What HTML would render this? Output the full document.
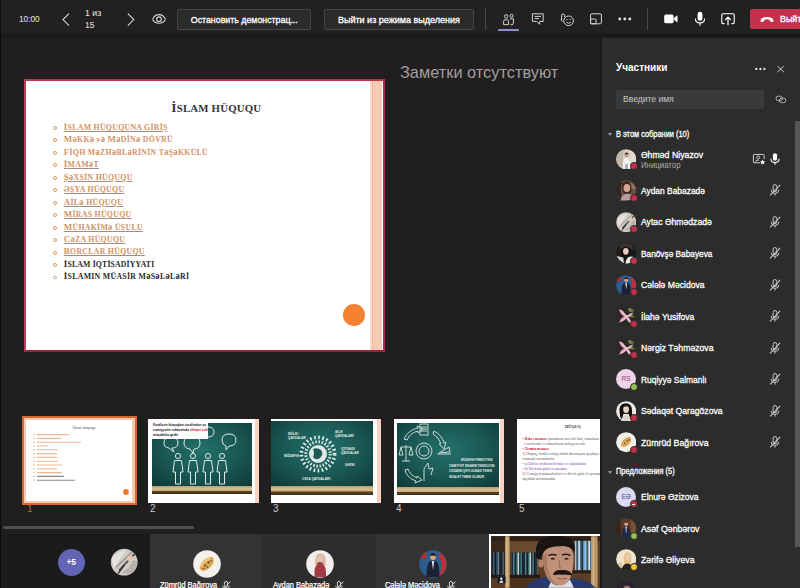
<!DOCTYPE html>
<html lang="ru">
<head>
<meta charset="utf-8">
<title>Собрание</title>
<style>
html,body{margin:0;padding:0;}
body{width:800px;height:588px;overflow:hidden;background:#1e1c1d;position:relative;font-family:"Liberation Sans",sans-serif;color:#fff;}
.abs{position:absolute;}
#topbar{left:0;top:0;width:800px;height:39px;background:linear-gradient(180deg,#222021 0,#222021 32.500px,#1b1a1a 34px,#1b1a1a 37px,#1f1d1e 39px);}
.tb-txt{-webkit-text-stroke:.12px #dcdcdc;color:#dcdcdc;font-size:9.2px;white-space:nowrap;transform-origin:0 50%;}
.btn span{display:inline-block;transform:scaleX(.93);transform-origin:50% 50%;-webkit-text-stroke:.32px #fff;}
.btn{box-sizing:border-box;height:21px;top:8.5px;border:1px solid #474646;background:#2c2b2b;border-radius:2px;color:#fff;font-size:9.600px;line-height:19px;text-align:center;white-space:nowrap;overflow:hidden;}
.vdiv{width:1px;top:8px;height:22px;background:#4b4a4a;}
#leave{left:750px;top:9px;width:52px;height:20px;background:#c4314b;border-radius:2px 0 0 2px;}
/* stage */
#stage{left:0;top:39px;width:602px;height:495px;background:#201e1f;}
#slide{left:23.800px;top:79.200px;width:360.900px;height:272.600px;background:#fff;box-sizing:border-box;border:2.400px solid #c0324f;border-left-color:#b9405c;border-right-color:#b02a49;border-bottom:2.900px solid #9a2340;overflow:hidden;font-family:"Liberation Serif",serif;}
#slide .strip{left:344.400px;top:0;width:12px;height:269px;background:linear-gradient(90deg,#fcdccd 0,#fcdccd 2.200px,#ecb79b 2.300px,#ecb79b 3.200px,#fccab4 3.300px);}
#slide .strip2{display:none;}
#slide h1{position:absolute;margin:0;left:0;width:381px;top:18.800px;text-align:center;font-size:13.5px;line-height:16px;font-weight:bold;color:#33333b;letter-spacing:.2px;}
#slide h1 small{font-size:10.8px;}
#slide ul{position:absolute;left:0;top:40.600px;margin:0;padding:0;list-style:none;}
#slide li{position:relative;height:12.480px;line-height:12.480px;font-size:7.800px;font-weight:bold;color:#d29265;padding-left:38px;white-space:nowrap;letter-spacing:.3px;}
#slide li::before{content:"";position:absolute;left:27.200px;top:4.200px;width:1.900px;height:1.900px;border:.9px solid #dc9258;border-radius:50%;}
#slide li u{text-decoration-thickness:.7px;text-underline-offset:.8px;text-decoration-color:#a08c80;}
#slide li.k{color:#2a2a2a;}
#slide li b{font-size:8.900px;line-height:1px;}
#slide li i{font-style:normal;font-size:9.600px;line-height:1px;}
#notes{left:399.500px;top:62px;font-size:16.600px;line-height:22px;color:#a09f9f;white-space:nowrap;transform:scaleX(.985);transform-origin:0 50%;}
.thumb{top:418px;height:87px;background:#fff;overflow:hidden;}
.tnum{top:503px;font-size:10px;line-height:12px;color:#c8c8c8;}
#hscroll{left:3px;top:525.700px;width:190.500px;height:3.800px;background:#525151;border-radius:2px;}
/* bottom strip */
#strip{left:0;top:534px;width:602px;height:54px;background:#1c1b1b;}
.tile{top:534px;height:54px;width:113px;}
.av{border-radius:50%;overflow:hidden;}
.tname{top:580.100px;font-size:8.200px;line-height:12px;color:#fff;white-space:nowrap;-webkit-text-stroke:.25px #fff;transform:scaleX(.905);transform-origin:0 50%;}
/* right panel */
#panel{left:602px;top:38px;width:198px;height:550px;background:#2d2c2c;}
.pname{left:640.800px;font-size:9.500px;line-height:12px;color:#fff;white-space:nowrap;-webkit-text-stroke:.3px #fff;transform-origin:0 50%;}
.psub{left:640.800px;font-size:8.500px;line-height:11px;color:#adacac;white-space:nowrap;transform:scaleX(.92);transform-origin:0 50%;}
.sect{left:616px;font-size:8.200px;line-height:11px;color:#fff;-webkit-text-stroke:.28px #fff;white-space:nowrap;transform:scaleX(.905);transform-origin:0 50%;}
.tri{left:607.5px;width:0;height:0;border-left:2.6px solid transparent;border-right:2.6px solid transparent;border-top:3.4px solid #9b9a9a;}
.pav{left:616px;width:20px;height:20px;border-radius:50%;overflow:hidden;}
.st{left:629.5px;width:6px;height:6px;border-radius:50%;border:1.2px solid #2d2c2c;background:#c4314b;}
.mic{left:768px;width:14px;height:14px;}
</style>
</head>
<body>
<div class="abs" style="left:0;top:0;width:1.300px;height:588px;background:#0b0b0b;z-index:5;"></div>
<div id="topbar" class="abs">
  <div class="abs tb-txt" style="left:18.700px;top:13px;line-height:12px;transform:scaleX(.9);">10:00</div>
  <svg class="abs" style="left:60px;top:11px" width="12" height="17" viewBox="0 0 12 17"><path d="M9 2.600 L3 8.600 L9 14.600" fill="none" stroke="#d6d6d6" stroke-width="1.100"/></svg>
  <div class="abs tb-txt" style="left:85px;top:6.900px;line-height:12px;transform:scaleX(.95);">1 из</div>
  <div class="abs tb-txt" style="left:85px;top:19.400px;line-height:12px;transform:scaleX(.93);">15</div>
  <svg class="abs" style="left:124px;top:11px" width="12" height="17" viewBox="0 0 12 17"><path d="M3.800 2.600 L9.800 8.600 L3.800 14.600" fill="none" stroke="#d6d6d6" stroke-width="1.100"/></svg>
  <svg class="abs" style="left:151px;top:12px" width="16" height="14" viewBox="0 0 16 14"><path d="M1.6 7.4 C3 3.9 5.4 2.6 8 2.6 C10.6 2.6 13 3.9 14.4 7.4" fill="none" stroke="#d6d6d6" stroke-width="1.1"/><path d="M1.6 7.4 C3 10.2 5.4 11.2 8 11.2 C10.6 11.2 13 10.2 14.4 7.4" fill="none" stroke="#d6d6d6" stroke-width="1.1"/><circle cx="8" cy="7.2" r="2.3" fill="none" stroke="#d6d6d6" stroke-width="1.1"/></svg>
  <div class="abs btn" style="left:177px;width:134px;"><span style="transform:scaleX(.918)">Остановить демонстрац...</span></div>
  <div class="abs btn" style="left:324px;width:150px;"><span style="transform:scaleX(.94)">Выйти из режима выделения</span></div>
  <div class="abs vdiv" style="left:485px;"></div>
  <!-- participants -->
  <svg class="abs" style="left:500.800px;top:12.600px" width="16" height="14" viewBox="0 0 16 14"><circle cx="5.2" cy="3.4" r="1.7" fill="none" stroke="#d6d6d6" stroke-width="1"/><circle cx="10.6" cy="2.8" r="1.5" fill="none" stroke="#d6d6d6" stroke-width="1"/><path d="M2.6 11.6 V8.4 Q2.6 6.8 4.2 6.8 H6.2 Q7.6 6.8 7.6 8.4 V11.6 Z" fill="none" stroke="#d6d6d6" stroke-width="1"/><path d="M8.8 5.8 H12.4 V10.2 Q12.4 11.6 10.8 11.6 H9.4" fill="none" stroke="#d6d6d6" stroke-width="1"/></svg>
  <div class="abs" style="left:498px;top:29px;width:21px;height:2px;background:#8f91cf;border-radius:1px;"></div>
  <!-- chat -->
  <svg class="abs" style="left:530px;top:12px" width="16" height="14" viewBox="0 0 16 14"><path d="M2.4 1.8 H13.2 V9.4 H9.6 V12.2 L6.6 9.4 H2.4 Z" fill="none" stroke="#d6d6d6" stroke-width="1"/><path d="M4.6 4.4 H11 M4.6 6.6 H9" stroke="#d6d6d6" stroke-width="1"/></svg>
  <!-- reactions -->
  <svg class="abs" style="left:559px;top:11.800px" width="17" height="16" viewBox="0 0 17 16"><circle cx="9.6" cy="8.8" r="4.8" fill="none" stroke="#d6d6d6" stroke-width="1"/><path d="M7.4 10.4 Q9.6 12.2 11.8 10.4" fill="none" stroke="#d6d6d6" stroke-width="1"/><circle cx="8" cy="7.6" r=".7" fill="#d6d6d6"/><circle cx="11.2" cy="7.6" r=".7" fill="#d6d6d6"/><path d="M2.6 7.6 V3.4 Q2.6 2 4 2 Q5.6 2 5.6 3.6 V5.2" fill="none" stroke="#d6d6d6" stroke-width="1"/><path d="M2.6 6 Q1.6 8 3.4 9.6" fill="none" stroke="#d6d6d6" stroke-width="1"/></svg>
  <!-- rooms -->
  <svg class="abs" style="left:588px;top:12px" width="16" height="14" viewBox="0 0 16 14"><rect x="2.6" y="1.8" width="10.8" height="10" rx="1.2" fill="none" stroke="#d6d6d6" stroke-width="1"/><rect x="2.6" y="7" width="5.4" height="4.8" rx=".8" fill="none" stroke="#d6d6d6" stroke-width="1"/></svg>
  <!-- more -->
  <svg class="abs" style="left:617px;top:16px" width="16" height="6" viewBox="0 0 16 6"><circle cx="2.800" cy="3" r="1.450" fill="#dedede"/><circle cx="7.800" cy="3" r="1.450" fill="#dedede"/><circle cx="12.800" cy="3" r="1.450" fill="#dedede"/></svg>
  <div class="abs vdiv" style="left:647px;"></div>
  <!-- camera -->
  <svg class="abs" style="left:663px;top:13px" width="16" height="12" viewBox="0 0 16 12"><rect x="1.2" y="1.6" width="9.4" height="8.6" rx="1.6" fill="#fff"/><path d="M11.2 5 L14.2 2.8 V9 L11.2 6.8 Z" fill="#fff" stroke="#fff" stroke-width=".6" stroke-linejoin="round"/></svg>
  <!-- mic -->
  <svg class="abs" style="left:692px;top:10px" width="16" height="18" viewBox="0 0 16 18"><rect x="5.6" y="1.8" width="4.8" height="9" rx="2.4" fill="#fff"/><path d="M3.4 8.6 Q3.4 13 8 13 Q12.600 13 12.600 8.600" fill="none" stroke="#fff" stroke-width="1.1"/><path d="M8 13 V15.800" stroke="#fff" stroke-width="1.1"/></svg>
  <!-- share -->
  <svg class="abs" style="left:720px;top:11px" width="16" height="16" viewBox="0 0 16 16"><path d="M4.600 12.600 H3 Q1.8 12.600 1.8 11.400 V4 Q1.8 2.800 3 2.800 H13 Q14.200 2.800 14.200 4 V11.400 Q14.200 12.600 13 12.600 H11.400" fill="none" stroke="#fff" stroke-width="1.1"/><path d="M8 14.200 V6.600 M5.200 9 L8 6.200 L10.800 9" fill="none" stroke="#fff" stroke-width="1.2"/></svg>
  <div id="leave" class="abs">
    <svg class="abs" style="left:9px;top:6px" width="16" height="9" viewBox="0 0 16 9"><path d="M1.6 6.200 Q1.200 3.600 4.400 2.600 Q8 1.600 11.600 2.600 Q14.800 3.600 14.400 6.200 Q14.300 7 13.400 6.900 L11.400 6.500 Q10.700 6.300 10.700 5.600 V4.700 Q8 4 5.300 4.700 V5.600 Q5.300 6.300 4.600 6.500 L2.600 6.900 Q1.700 7 1.600 6.200 Z" fill="#fff"/></svg>
    <div class="abs" style="left:30px;top:4px;font-size:9.600px;line-height:12px;-webkit-text-stroke:.32px #fff;color:#fff;white-space:nowrap;transform:scaleX(.93);transform-origin:0 50%;">Выйти</div>
  </div>
</div>
<div id="stage" class="abs"></div>
<div id="slide" class="abs">
  <div class="abs strip"></div><div class="abs strip2"></div>
  <h1>İ<small>SLAM HÜQUQU</small></h1>
  <ul>
    <li><u><b>İ</b>SLAM HÜQUQUNA GİRİŞ</u></li>
    <li><b>M</b><i>ə</i>KK<i>ə</i> v<i>ə</i> <b>M</b><i>ə</i>DİN<i>ə</i> DÖVRÜ</li>
    <li><b>F</b>İQH M<i>ə</i>ZH<i>ə</i>BL<i>ə</i>RİNİN T<i>ə</i>Ş<i>ə</i>KKÜLÜ</li>
    <li><u><b>İ</b>MAM<i>ə</i>T</u></li>
    <li><u><b>Ş</b><i>ə</i>XSİN HÜQUQU</u></li>
    <li><u>ƏŞYA HÜQUQU</u></li>
    <li><u><b>A</b>İL<i>ə</i> HÜQUQU</u></li>
    <li><u><b>M</b>İRAS HÜQUQU</u></li>
    <li><u><b>M</b>ÜHAKİM<i>ə</i> ÜSULU</u></li>
    <li><u><b>C</b><i>ə</i>ZA HÜQUQU</u></li>
    <li><u><b>B</b>ORCLAR HÜQUQU</u></li>
    <li class="k" style="letter-spacing:.15px"><b>İ</b>SLAM İQTİSADİYYATI</li>
    <li class="k"><b>İ</b>SLAMIN MÜASİR M<i>ə</i>S<i>ə</i>L<i>ə</i>L<i>ə</i>Rİ</li>
  </ul>

  <div class="abs" style="left:317.500px;top:223px;width:21.600px;height:21.600px;border-radius:50%;background:#f58233;"></div>
</div>
<div id="notes" class="abs">Заметки отсутствуют</div>
<!--THUMBS-START-->
<!-- thumb 1 (selected) -->
<div class="abs" style="left:22px;top:416px;width:115px;height:89px;background:#d9692b;"></div>
<div class="abs" style="left:24px;top:418px;width:111px;height:85px;background:#f7c9b1;"></div>
<div class="abs" style="left:26px;top:420px;width:106px;height:81px;background:#fff;font-family:'Liberation Serif',serif;overflow:hidden;">
  <div class="abs" style="left:0;top:5px;width:116px;text-align:center;font-size:4.2px;line-height:6px;color:#555;white-space:nowrap;">İslam hüququ</div>
  <svg class="abs" style="left:0;top:0" width="106" height="81" viewBox="0 0 106 81">
    <g stroke="#ecb896" stroke-width="1.100">
      <path d="M11 14.600H43M11 18.400H35M11 22.200H55M11 26H22M11 29.800H32M11 33.600H31M11 37.400H31M11 41.200H32M11 45H36M11 48.800H31M11 52.600H36"/>
    </g>
    <g stroke="#8a8a8a" stroke-width="1.100"><path d="M11 56.400H38M11 60.200H49"/></g>
    <g fill="#e89a6a"><circle cx="8" cy="14.600" r=".7"/><circle cx="8" cy="18.400" r=".7"/><circle cx="8" cy="22.200" r=".7"/><circle cx="8" cy="26" r=".7"/><circle cx="8" cy="29.800" r=".7"/><circle cx="8" cy="33.600" r=".7"/><circle cx="8" cy="37.400" r=".7"/><circle cx="8" cy="41.200" r=".7"/><circle cx="8" cy="45" r=".7"/><circle cx="8" cy="48.800" r=".7"/><circle cx="8" cy="52.600" r=".7"/><circle cx="8" cy="56.400" r=".7"/><circle cx="8" cy="60.200" r=".7"/></g>
    <circle cx="100" cy="72" r="2.900" fill="#f07a2a"/>
  </svg>
</div>
<!-- thumb 2 -->
<div class="abs" style="left:148px;top:419px;width:111px;height:84px;background:#fff;overflow:hidden;">
  <div class="abs" style="left:107px;top:0;width:4px;height:84px;background:#f9d3c0;"></div>
  <div class="abs" style="left:4px;top:4px;width:100px;height:63.3px;background:radial-gradient(ellipse 70% 75% at 50% 42%,#23706a 0,#1a5853 55%,#0f3c39 100%);"></div><div class="abs" style="left:4px;top:67.3px;width:100px;height:8.2px;background:linear-gradient(180deg,#b99d6c 0,#d9c08f 35%,#c7a871 60%,#5e4526 62%,#3a2c18 100%);"></div>
  <svg class="abs" style="left:4px;top:4px" width="100" height="72" viewBox="0 0 100 72">
    <g fill="none" stroke="#dfe9e6" stroke-width="1">
      <circle cx="26" cy="33" r="2.600"/><path d="M22.500 37.500H29.500L31 49H28.500V61H23.500V49H21Z"/>
      <circle cx="41" cy="33" r="2.600"/><path d="M37.500 37.500H44.500L46 49H43.500V61H38.500V49H36Z"/>
      <circle cx="56" cy="33" r="2.600"/><path d="M52.500 37.500H59.500L61 49H58.500V61H53.500V49H51Z"/>
      <circle cx="70" cy="33" r="2.600"/><path d="M66.500 37.500H73.500L75 49H72.500V61H67.500V49H65Z"/>
      <path d="M12 20Q12 14 19 14Q26 14 26 20Q26 25 20 25L22 29L17 25Q12 24.500 12 20Z"/>
      <path d="M32 20Q32 13 40 13Q48 13 48 20Q48 26 42 26L41 30L38 26Q32 25.500 32 20Z"/>
      <circle cx="57" cy="9" r="5"/>
      <path d="M70 17Q70 11 77 11Q84 11 84 17Q84 23 77 23L74 27L74 23Q70 22 70 17Z"/>
    </g>
  </svg>
  <div class="abs" style="left:4px;top:4px;width:56px;height:16px;background:#fff;font-size:3.400px;line-height:4.800px;color:#111;font-weight:bold;white-space:nowrap;overflow:hidden;padding-left:1px;box-sizing:border-box;">Fərdlərin hüquqları tərəfindən və<br>cəmiyyətin rəhbərində <span style="color:#d02030">ehtiyat şəkildə</span><br>müşahidə gedir</div>
</div>
<!-- thumb 3 -->
<div class="abs" style="left:271px;top:419px;width:110px;height:84px;background:#fff;overflow:hidden;">
  <div class="abs" style="left:106px;top:0;width:4px;height:84px;background:#f9d3c0;"></div>
  <div class="abs" style="left:0px;top:2px;width:102px;height:65px;background:radial-gradient(ellipse 70% 75% at 50% 42%,#23706a 0,#1a5853 55%,#0f3c39 100%);"></div><div class="abs" style="left:0px;top:67px;width:102px;height:8.5px;background:linear-gradient(180deg,#b99d6c 0,#d9c08f 35%,#c7a871 60%,#5e4526 62%,#3a2c18 100%);"></div>
  <svg class="abs" style="left:-2px;top:-1px" width="103" height="73" viewBox="0 0 103 73">
    <circle cx="49" cy="36" r="9" fill="#dfe9e6"/>
    <path d="M44 31Q48 29 52 32Q55 36 51 40Q47 43 44 39Q46 35 44 31Z" fill="#1f5a55"/>
    <circle cx="49" cy="36" r="12.200" fill="none" stroke="#dfe9e6" stroke-width="3" stroke-dasharray="1.500 1.700"/><circle cx="49" cy="36" r="16.600" fill="none" stroke="#dfe9e6" stroke-width="3.600" stroke-dasharray="1.700 2.400"/>
    <g fill="#e6eeeb" font-family="'Liberation Sans',sans-serif" font-size="3.200" font-weight="bold">
      <text x="19" y="17">MÜLKİ</text><text x="19" y="21">QAYDALAR</text>
      <text x="66" y="15">AİLƏ</text><text x="66" y="19">QAYDALARI</text>
      <text x="72" y="32">İQTİSADİ</text><text x="72" y="36">QAYDALAR</text>
      <text x="15" y="39">MÜDAFİƏ</text><text x="76" y="48">ŞƏXSİ</text>
      <text x="33" y="62">CƏZA QAYDALARI</text>
    </g>
  </svg>
</div>
<!-- thumb 4 -->
<div class="abs" style="left:394px;top:419px;width:110px;height:84px;background:#fff;overflow:hidden;">
  <div class="abs" style="left:106px;top:0;width:4px;height:84px;background:#f9d3c0;"></div>
  <div class="abs" style="left:3px;top:4px;width:102px;height:64.2px;background:radial-gradient(ellipse 70% 75% at 50% 42%,#23706a 0,#1a5853 55%,#0f3c39 100%);"></div><div class="abs" style="left:3px;top:68.2px;width:102px;height:8.3px;background:linear-gradient(180deg,#b99d6c 0,#d9c08f 35%,#c7a871 60%,#5e4526 62%,#3a2c18 100%);"></div>
  <svg class="abs" style="left:3px;top:4px" width="102" height="72" viewBox="0 0 102 72">
    <g fill="none" stroke="#c9d8d4" stroke-width="1">
      <path d="M7 16Q11 7 21 5L20 3L26 6L21 10L21 8Q13 10 10 17Z"/>
      <path d="M37 8Q45 12 47 20L49 19L47 26L42 21L44 21Q42 14 36 11Z"/>
      <path d="M8 47Q10 55 19 58L18 60L25 57L20 53L20 55Q13 52 11 46Z"/>
      <circle cx="27" cy="28" r="8"/><circle cx="27" cy="28" r="5"/>
      <path d="M9 22V38M4 24H14M4 24L2 32H6ZM14 24L12 32H16ZM5 38H13"/>
      <rect x="23" y="1" width="8" height="11"/><path d="M24 4H30M24 6H30M24 8H30"/>
      <path d="M42 30L52 24L53 29L42 30ZM40 31H54"/>
      <path d="M27 58V46L31 40L32 46L36 45L34 52"/>
    </g>
    <g fill="#e6eeeb" font-family="'Liberation Sans',sans-serif" font-size="2.900" font-weight="bold">
      <text x="64" y="38">MÜDAFİƏ FƏRDİYYƏSİ</text><text x="52" y="43.500">CƏMİYYƏT İNSANIN TƏMİZLİYİNİ</text><text x="52" y="49">CƏZANIN QƏTİ OLMASI TƏMİN</text><text x="52" y="54.500">ƏDALƏT TƏMİN OLUNUR</text>
    </g>
  </svg>
</div>
<!-- thumb 5 -->
<div class="abs" style="left:517px;top:419px;width:85px;height:84px;background:#fff;overflow:hidden;font-family:'Liberation Serif',serif;">
  <div class="abs" style="left:48px;top:4.500px;font-size:4.200px;line-height:6px;color:#333;font-weight:bold;white-space:nowrap;">HÜQUQ</div>
  <div class="abs" style="left:5.500px;top:17.500px;font-size:3.700px;line-height:5.100px;color:#555;white-space:nowrap;">
    <span style="color:#d02030;font-weight:bold">• Bəhsə mənası:</span> qanunların məcəllə halı, insanların<br>
    &nbsp;&nbsp;vəzifələrini və ixtiyarlarını müəyyən edir<br>
    <span style="color:#d02030;font-weight:bold">• Termin mənası:</span><br>
    <span style="color:#d02030">1)</span> Hüquq, fərdin cəmiyyətdəki davranışını qaydaya salan<br>
    təminatlı normalardır.<br>
    <span style="color:#7a3a9a">• a) Dövlət məhkəmələrinin və təşkilatların</span><br>
    <span style="color:#7a3a9a">• b) Dövlətin gücü ilə qorunur</span><br>
    <span style="color:#d02030">2)</span> Cəmiyyət münasibətləri və dövlət gücü ilə qorunan<br>
    qaydalar məcmusudur.
  </div>
</div>
<div class="abs tnum" style="left:27px;color:#c0652f;">1</div>
<div class="abs tnum" style="left:150px;">2</div>
<div class="abs tnum" style="left:273px;">3</div>
<div class="abs tnum" style="left:396px;">4</div>
<div class="abs tnum" style="left:519px;">5</div>
<!--THUMBS-END-->
<div id="hscroll" class="abs"></div>
<!--STRIP-START-->
<div id="strip" class="abs"></div>
<div class="abs av" style="left:57.700px;top:549.400px;width:27px;height:27px;background:#6264b6;text-align:center;line-height:27px;font-size:8.400px;font-weight:bold;color:#fff;">+5</div>
<svg class="abs" style="left:109.800px;top:548.300px" width="28.400" height="28.400" viewBox="0 0 28 28"><circle cx="14" cy="14" r="14" fill="#151414"/><circle cx="14" cy="14" r="13.200" fill="#cfcac5"/><path d="M2 10Q8 3 16 2L4 20Q2 16 2 10Z" fill="#e6e2dd"/><path d="M25 5L9 22" stroke="#4a4440" stroke-width="1.600"/><path d="M22 3.500L6 19" stroke="#8a847e" stroke-width="1"/><path d="M27 14Q26 22 19 26L12 24Q20 20 23 11Z" fill="#b8b2ac"/><ellipse cx="19.500" cy="10" rx="3.300" ry="2.300" transform="rotate(-40 19.500 10)" fill="#e8c2b2"/><path d="M14 17L8 25" stroke="#2a2624" stroke-width="1.300"/></svg>
<div class="abs tile" style="left:149.500px;width:112.500px;background:#343333;"></div>
<div class="abs tile" style="left:262px;width:114px;background:#2e2d2d;"></div>
<div class="abs tile" style="left:376px;width:113.500px;background:#343333;"></div>
<svg class="abs" style="left:193.200px;top:549.500px" width="28" height="28" viewBox="0 0 28 28"><circle cx="14" cy="14" r="13.800" fill="#f3f0ea"/><path d="M6.500 17.500Q9 8.500 18.500 6.500Q21.500 8 20.500 12.500Q18 19 10.500 21Q7 20.500 6.500 17.500Z" fill="#dfa754"/><path d="M8 17Q10.500 10.500 18 8" stroke="#f0c987" stroke-width="1.600" fill="none"/><circle cx="12" cy="15.500" r=".9" fill="#4a3020"/><circle cx="15.500" cy="12.500" r=".9" fill="#4a3020"/><circle cx="14.500" cy="17" r=".8" fill="#4a3020"/><circle cx="18" cy="11" r=".8" fill="#4a3020"/><circle cx="10.500" cy="18.500" r=".7" fill="#4a3020"/></svg>
<svg class="abs" style="left:305.700px;top:549.500px" width="28" height="28" viewBox="0 0 28 28"><circle cx="14" cy="14" r="13.800" fill="#f1eeec"/><path d="M8.500 27Q8 17 11 13Q14 10.500 17 13Q20.500 17 20 27Z" fill="#a23a44"/><path d="M9.500 8.500Q10 3.500 14.500 3.500Q19 3.500 19.500 9Q20.500 15 18.500 17L16.500 12Q14 11 11.500 12.500L10 17.500Q8.500 14 9.500 8.500Z" fill="#d9b8a4"/><ellipse cx="14.300" cy="9" rx="2.600" ry="3.300" fill="#e6c4b4"/></svg>
<svg class="abs" style="left:418.500px;top:549.500px" width="28" height="28" viewBox="0 0 28 28"><circle cx="14" cy="14" r="13.800" fill="#2d5c8e"/><path d="M19 2Q27.500 6 27.800 14Q27.500 22 20 26.500Q23 20 22 13Q21.500 7 19 2Z" fill="#b8333a"/><path d="M1 9Q3 4 7 2L8 8Z" fill="#a33"/><path d="M7.500 27Q7.500 14 10.500 11.500L14 10.500L17.500 11.500Q20.500 14 20.500 27Z" fill="#1c2233"/><path d="M12.800 11L14 20L15.200 11Z" fill="#e8e8ee"/><circle cx="14" cy="7" r="2.900" fill="#d2a58c"/><path d="M11 6Q11.500 3.300 14 3.300Q16.500 3.300 17 6Q14 4.800 11 6Z" fill="#1a1512"/></svg>
<div class="abs tname" style="left:159.500px;">Zümrüd Bağırova</div>
<div class="abs tname" style="left:272.500px;">Aydan Babazadə</div>
<div class="abs tname" style="left:385px;">Cələlə Məcidova</div>
<svg class="abs tmic" style="left:220px;top:579.500px" width="12" height="12" viewBox="0 0 12 12"><g fill="none" stroke="#e0e0e0" stroke-width=".9"><rect x="4.400" y="1.400" width="3.200" height="6" rx="1.600"/><path d="M2.700 5.800Q2.700 8.900 6 8.900Q9.300 8.900 9.300 5.800M6 8.900V10.800"/><path d="M1.800 10.600L10.400 1.600" stroke-width="1"/></g></svg>
<svg class="abs tmic" style="left:332.800px;top:579.500px" width="12" height="12" viewBox="0 0 12 12"><g fill="none" stroke="#e0e0e0" stroke-width=".9"><rect x="4.400" y="1.400" width="3.200" height="6" rx="1.600"/><path d="M2.700 5.800Q2.700 8.900 6 8.900Q9.300 8.900 9.300 5.800M6 8.900V10.800"/><path d="M1.800 10.600L10.400 1.600" stroke-width="1"/></g></svg>
<svg class="abs tmic" style="left:445px;top:579.500px" width="12" height="12" viewBox="0 0 12 12"><g fill="none" stroke="#e0e0e0" stroke-width=".9"><rect x="4.400" y="1.400" width="3.200" height="6" rx="1.600"/><path d="M2.700 5.800Q2.700 8.900 6 8.900Q9.300 8.900 9.300 5.800M6 8.900V10.800"/><path d="M1.800 10.600L10.400 1.600" stroke-width="1"/></g></svg>
<!-- video -->
<div class="abs" style="left:489.200px;top:533.800px;width:112.200px;height:55px;background:#fff;"></div>
<div class="abs" style="left:491px;top:536px;width:108.600px;height:52px;overflow:hidden;background:#5b3e25;"></div>
<svg class="abs" style="left:491px;top:536px" width="108.600" height="52" viewBox="0 0 110 52"><rect x="0" y="0" width="110" height="52" fill="#5b3e25"/><rect x="0" y="0" width="110" height="5" fill="#2c2018"/><rect x="0" y="5" width="14" height="11" fill="#3a281a"/><rect x="19" y="5" width="30" height="11" fill="#6a4a2c"/><rect x="0.5" y="16.0" width="1.6" height="23.0" fill="#1a2636"/><rect x="2.1" y="16.0" width="1.6" height="23.0" fill="#3c5f7a"/><rect x="3.7" y="16.0" width="1.6" height="23.0" fill="#121a26"/><rect x="5.3" y="16.0" width="1.6" height="23.0" fill="#2a4a5e"/><rect x="6.9" y="16.0" width="1.6" height="23.0" fill="#5d7f92"/><rect x="8.5" y="16.0" width="1.6" height="23.0" fill="#18222e"/><rect x="10.1" y="16.0" width="1.6" height="23.0" fill="#1a2636"/><rect x="11.7" y="16.0" width="1.6" height="23.0" fill="#3c5f7a"/><rect x="13.3" y="16.0" width="0.7" height="23.0" fill="#121a26"/><rect x="21.0" y="16.5" width="1.5" height="22.5" fill="#1c2a3c"/><rect x="22.5" y="16.5" width="1.5" height="22.5" fill="#4f86a0"/><rect x="24.0" y="16.5" width="1.5" height="22.5" fill="#16202c"/><rect x="25.5" y="16.5" width="1.5" height="22.5" fill="#2d6a6e"/><rect x="27.0" y="16.5" width="1.5" height="22.5" fill="#c9d6dc"/><rect x="28.5" y="16.5" width="1.5" height="22.5" fill="#23344a"/><rect x="30.0" y="16.5" width="1.5" height="22.5" fill="#3f7f8f"/><rect x="31.5" y="16.5" width="1.5" height="22.5" fill="#101820"/><rect x="33.0" y="16.5" width="1.5" height="22.5" fill="#1c2a3c"/><rect x="34.5" y="16.5" width="1.5" height="22.5" fill="#4f86a0"/><rect x="36.0" y="16.5" width="1.5" height="22.5" fill="#16202c"/><rect x="37.5" y="16.5" width="1.5" height="22.5" fill="#2d6a6e"/><rect x="39.0" y="16.5" width="1.5" height="22.5" fill="#c9d6dc"/><rect x="40.5" y="16.5" width="1.5" height="22.5" fill="#23344a"/><rect x="42.0" y="16.5" width="1.5" height="22.5" fill="#3f7f8f"/><rect x="43.5" y="16.5" width="1.5" height="22.5" fill="#101820"/><rect x="45.0" y="16.5" width="1.5" height="22.5" fill="#1c2a3c"/><rect x="46.5" y="16.5" width="0.5" height="22.5" fill="#4f86a0"/><rect x="0" y="39" width="50" height="3.500" fill="#241a12"/><rect x="19" y="42.500" width="30" height="10" fill="#4a321e"/><rect x="14.300" y="0" width="4.600" height="52" fill="#c4a172"/><rect x="15.600" y="0" width="1.200" height="52" fill="#dcc091"/><rect x="85.0" y="4.5" width="1.7" height="30.0" fill="#9fc3d6"/><rect x="86.7" y="4.5" width="1.7" height="30.0" fill="#2f5f7e"/><rect x="88.4" y="4.5" width="1.7" height="30.0" fill="#d6e4ea"/><rect x="90.1" y="4.5" width="1.7" height="30.0" fill="#3f7898"/><rect x="91.8" y="4.5" width="1.7" height="30.0" fill="#1c3446"/><rect x="93.5" y="4.5" width="1.7" height="30.0" fill="#7fb0c8"/><rect x="95.2" y="4.5" width="1.7" height="30.0" fill="#9fc3d6"/><rect x="96.9" y="4.5" width="1.7" height="30.0" fill="#2f5f7e"/><rect x="98.6" y="4.5" width="1.7" height="30.0" fill="#d6e4ea"/><rect x="100.3" y="4.5" width="1.2" height="30.0" fill="#3f7898"/><rect x="82" y="34.500" width="20" height="3" fill="#2a1e14"/><rect x="101.200" y="0" width="6.800" height="52" fill="#b8956a"/><rect x="103" y="0" width="1.500" height="52" fill="#d4b88c"/><path d="M36 52Q40 44 52 42L60 40L86 43Q100 45 106 52Z" fill="#27396e"/><path d="M58 52L62 43L70 49L80 44L84 52Z" fill="#d9dde6"/><path d="M52 18Q51 8 66 7Q83 7 83.500 20Q84 34 80 43Q76 50 70 50Q62 50 57 42Q53 34 52 18Z" fill="#c0917a"/><path d="M52 20Q53 34 57 42Q62 50 68 50Q60 44 58 34Q56 26 57 16Z" fill="#a87a62"/><ellipse cx="50.500" cy="27" rx="2.600" ry="4.600" fill="#b5836a"/><path d="M46 22Q43 6 54 1Q66 -3 78 1Q86 5 84.500 16Q80 9 70 10Q58 10 54 15Q51 19 51 24Z" fill="#1a1513"/><path d="M58 19.500Q62 17.500 66.500 19.200M72 19Q76 17.300 80.500 19.400" stroke="#2a1c16" stroke-width="1.500" fill="none"/><ellipse cx="62.500" cy="22.600" rx="2.200" ry="1" fill="#3a2820"/><ellipse cx="76.500" cy="22.600" rx="2.200" ry="1" fill="#3a2820"/><path d="M69.500 24Q68.500 30 70.500 32.500" stroke="#9a6c56" stroke-width="1.200" fill="none"/><path d="M63.500 38.500Q66 34 71.500 35Q78 34 81.500 38.800Q76 37.800 72 38.200Q68 37.800 63.500 38.500Z" fill="#1a1412" stroke="#1a1412" stroke-width="1.200" stroke-linejoin="round"/><path d="M67 42.500Q72 44 77 42.500" stroke="#8a5a48" stroke-width="1" fill="none"/><rect x="6.500" y="40.500" width="8" height="7" fill="#15181c" stroke="#3a3f44" stroke-width=".5"/><circle cx="10.500" cy="43" r="1.300" fill="#e8e8e8"/><path d="M8.500 47Q8.500 44.800 10.500 44.800Q12.500 44.800 12.500 47Z" fill="#e8e8e8"/></svg>
<!--STRIP-END-->
<!--PANEL-START-->
<div id="panel" class="abs"></div>
<div class="abs" style="left:600px;top:38px;width:2px;height:550px;background:#1a1919;"></div>
<div class="abs" style="left:795px;top:121px;width:5px;height:426px;background:#575656;"></div>
<div class="abs" style="left:615.500px;top:60.300px;font-size:11px;line-height:14px;font-weight:bold;color:#fff;white-space:nowrap;transform:scaleX(.91);transform-origin:0 50%;">Участники</div>
<svg class="abs" style="left:753px;top:66px" width="14" height="6" viewBox="0 0 14 6"><circle cx="3.300" cy="3" r="1.150" fill="#e4e4e4"/><circle cx="7.400" cy="3" r="1.150" fill="#e4e4e4"/><circle cx="11.400" cy="3" r="1.150" fill="#e4e4e4"/></svg>
<svg class="abs" style="left:775px;top:64px" width="11" height="11" viewBox="0 0 11 11"><path d="M2.400 2L8.800 8M8.800 2L2.400 8" stroke="#d0d0d0" stroke-width="1" fill="none"/></svg>
<div class="abs" style="left:616px;top:89.500px;width:148px;height:19.500px;background:#3b3a3a;border-radius:2px;"></div>
<div class="abs" style="left:623px;top:93px;font-size:9px;line-height:12px;color:#c4c3c3;white-space:nowrap;transform:scaleX(.95);transform-origin:0 50%;">Введите имя</div>
<svg class="abs" style="left:773px;top:93px" width="15" height="13" viewBox="0 0 15 13"><g fill="none" stroke="#b4b3b3" stroke-width="1"><rect x="3" y="3.200" width="6.400" height="4.400" rx="2.200"/><rect x="6.400" y="5.200" width="6.400" height="4.400" rx="2.200"/></g></svg>
<div class="abs tri" style="top:133px;"></div>
<div class="abs sect" style="top:128.500px;">В этом собрании (10)</div>
<div class="abs tri" style="top:470.500px;"></div>
<div class="abs sect" style="top:466px;">Предложения (5)</div>
<svg class="abs" style="left:615.800px;top:148.8px" width="20.400" height="20.400" viewBox="0 0 28 28"><circle cx="14" cy="14" r="13.800" fill="#d8cfc3"/><path d="M0 14Q2 4 10 1L9 27Q2 23 0 14Z" fill="#c2b6a6"/><path d="M20 2Q27 6 27.800 14Q27 22 21 26Z" fill="#e4dcd0"/><path d="M9.500 27.500Q9 15 12 12.500L14.500 11.800L17 12.500Q20 15 19.500 27.500Z" fill="#f4f3f0"/><circle cx="14.500" cy="8.300" r="2.700" fill="#c49a80"/><path d="M11.800 7.600Q12 4.800 14.500 4.800Q17 4.800 17.200 7.600Q14.500 6.200 11.800 7.600Z" fill="#2a201a"/><path d="M12.500 20.500H16.500V27.500H12.500Z" fill="#6a7a9a" opacity=".55"/></svg>
<div class="abs st" style="top:162.3px;background:#c4314b;"></div>
<div class="abs pname" style="top:148.6px;transform:scaleX(0.921);">Əhməd Niyazov</div>
<div class="abs psub" style="top:159.6px;">Инициатор</div>
<svg class="abs" style="left:751.5px;top:152.5px" width="14" height="12" viewBox="0 0 14 12"><path d="M8 9.800H2.200Q1.400 9.800 1.400 9V2.200Q1.400 1.400 2.200 1.400H11.400Q12.200 1.400 12.200 2.200V6" fill="none" stroke="#d0d0d0" stroke-width="1"/><circle cx="6.200" cy="4.400" r="1.500" fill="none" stroke="#d0d0d0" stroke-width=".9"/><path d="M3.800 9.600V8.400Q3.800 7.200 5 7.200H7.200" fill="none" stroke="#d0d0d0" stroke-width=".9"/><path d="M10.600 6.400L11.400 8.200L13.300 8.400L11.900 9.700L12.300 11.600L10.600 10.600L8.900 11.600L9.300 9.700L7.900 8.400L9.800 8.200Z" fill="#fff"/></svg>
<svg class="abs" style="left:768.3px;top:151.5px" width="14" height="14" viewBox="0 0 14 14"><rect x="4.900" y="1.200" width="4.200" height="7.600" rx="2.100" fill="#fff"/><path d="M2.900 6.800Q2.900 10.600 7 10.600Q11.100 10.600 11.100 6.800M7 10.600V12.800" fill="none" stroke="#fff" stroke-width="1.100"/></svg>
<svg class="abs" style="left:615.800px;top:180.3px" width="20.400" height="20.400" viewBox="0 0 28 28"><circle cx="14" cy="14" r="13.800" fill="#6b5144"/><path d="M0 14Q1 5 8 1.500Q5 12 8 26Q1 22 0 14Z" fill="#2c2220"/><path d="M8 4Q12 0 18 2Q22 5 21.500 12Q21 18 17 20Q12 21 9.500 16Q7.500 10 8 4Z" fill="#3a2a24"/><ellipse cx="15" cy="11" rx="4.600" ry="5.600" fill="#d6a78e"/><path d="M6 28Q8 19 15 19Q23 19 25 26Q20 28 14 28Z" fill="#b89a98"/><path d="M19 3Q26 6 27.500 13Q24 12 21.500 12Q21.500 6 19 3Z" fill="#8f7466"/></svg>
<div class="abs st" style="top:193.8px;background:#c4314b;"></div>
<div class="abs pname" style="top:184.6px;transform:scaleX(0.886);">Aydan Babazadə</div>
<svg class="abs" style="left:768.2px;top:183.2px" width="14" height="14" viewBox="0 0 14 14"><g fill="none" stroke="#c9c9c9" stroke-width="1"><rect x="5.100" y="1.600" width="3.800" height="7" rx="1.900"/><path d="M3.100 6.800Q3.100 10.400 7 10.400Q10.900 10.400 10.900 6.800M7 10.400V12.600"/><path d="M2 12.400L12.200 1.800" stroke-width="1.100"/></g></svg>
<svg class="abs" style="left:615.800px;top:211.8px" width="20.400" height="20.400" viewBox="0 0 28 28"><circle cx="14" cy="14" r="13.800" fill="#cfcac5"/><path d="M2 10Q8 3 16 2L4 20Q2 16 2 10Z" fill="#e6e2dd"/><path d="M25 5L9 22" stroke="#4a4440" stroke-width="1.800"/><path d="M22 3.500L6 19" stroke="#8a847e" stroke-width="1.100"/><path d="M27 14Q26 22 19 26L12 24Q20 20 23 11Z" fill="#b8b2ac"/><ellipse cx="19.500" cy="10" rx="3.300" ry="2.300" transform="rotate(-40 19.500 10)" fill="#e8c2b2"/><path d="M14 17L8 25" stroke="#2a2624" stroke-width="1.400"/></svg>
<div class="abs st" style="top:225.3px;background:#c4314b;"></div>
<div class="abs pname" style="top:216.1px;transform:scaleX(0.911);">Aytac Əhmədzadə</div>
<svg class="abs" style="left:768.2px;top:214.7px" width="14" height="14" viewBox="0 0 14 14"><g fill="none" stroke="#c9c9c9" stroke-width="1"><rect x="5.100" y="1.600" width="3.800" height="7" rx="1.900"/><path d="M3.100 6.800Q3.100 10.400 7 10.400Q10.900 10.400 10.900 6.800M7 10.400V12.600"/><path d="M2 12.400L12.200 1.800" stroke-width="1.100"/></g></svg>
<svg class="abs" style="left:615.800px;top:243.3px" width="20.400" height="20.400" viewBox="0 0 28 28"><circle cx="14" cy="14" r="13.800" fill="#1d1a1a"/><path d="M6 3Q14 -2 22 3L24 10Q18 6 14 6Q9 6 5 10Z" fill="#3a3434"/><path d="M7 14Q6 5 13.500 5Q21 5 20.500 14Q21.500 21 19 24L8 24Q5.500 20 7 14Z" fill="#161212"/><ellipse cx="13.500" cy="11.500" rx="3.800" ry="4.800" fill="#e4cdc0"/><path d="M13 28Q14 19 20 18.500Q26 19 27 22Q23 27 16 28Z" fill="#eeeae6"/><path d="M1 18Q4 25 11 27.500L10 20Z" fill="#d8d4d0"/></svg>
<div class="abs st" style="top:256.8px;background:#c4314b;"></div>
<div class="abs pname" style="top:247.6px;transform:scaleX(0.872);">Banövşə Babayeva</div>
<svg class="abs" style="left:768.2px;top:246.2px" width="14" height="14" viewBox="0 0 14 14"><g fill="none" stroke="#c9c9c9" stroke-width="1"><rect x="5.100" y="1.600" width="3.800" height="7" rx="1.900"/><path d="M3.100 6.800Q3.100 10.400 7 10.400Q10.900 10.400 10.900 6.800M7 10.400V12.600"/><path d="M2 12.400L12.200 1.800" stroke-width="1.100"/></g></svg>
<svg class="abs" style="left:615.800px;top:274.8px" width="20.400" height="20.400" viewBox="0 0 28 28"><circle cx="14" cy="14" r="13.800" fill="#2d5c8e"/><path d="M19 2Q27.500 6 27.800 14Q27.500 22 20 26.500Q23 20 22 13Q21.500 7 19 2Z" fill="#b8333a"/><path d="M1 9Q3 4 7 2L8 8Z" fill="#a33"/><path d="M7.500 27Q7.500 14 10.500 11.500L14 10.500L17.500 11.500Q20.500 14 20.500 27Z" fill="#1c2233"/><path d="M12.800 11L14 20L15.200 11Z" fill="#e8e8ee"/><circle cx="14" cy="7" r="2.900" fill="#d2a58c"/><path d="M11 6Q11.500 3.300 14 3.300Q16.500 3.300 17 6Q14 4.800 11 6Z" fill="#1a1512"/></svg>
<div class="abs st" style="top:288.3px;background:#c4314b;"></div>
<div class="abs pname" style="top:279.1px;transform:scaleX(0.906);">Cələlə Məcidova</div>
<svg class="abs" style="left:768.2px;top:277.7px" width="14" height="14" viewBox="0 0 14 14"><g fill="none" stroke="#c9c9c9" stroke-width="1"><rect x="5.100" y="1.600" width="3.800" height="7" rx="1.900"/><path d="M3.100 6.800Q3.100 10.400 7 10.400Q10.900 10.400 10.900 6.800M7 10.400V12.600"/><path d="M2 12.400L12.200 1.800" stroke-width="1.100"/></g></svg>
<svg class="abs" style="left:615.800px;top:306.3px" width="20.400" height="20.400" viewBox="0 0 28 28"><circle cx="14" cy="14" r="13.800" fill="#2b2a20"/><path d="M16 3Q22 2 25 7Q22 9 18 8Z" fill="#6f7e40"/><path d="M19 12Q24 11 26 15Q22 17 19 15Z" fill="#5c6a36"/><path d="M4 5Q8 4 12 10L15 13Q19 10 24 9Q22 14 17 15.500Q21 19 21 24Q16 22 14 17.500Q10 22 4 23Q6 17 11 14.500Q6 11 4 5Z" fill="#e9a6cf"/><path d="M6 7Q10 9 13.500 13.500Q10 12 6 7ZM14.500 15Q18 18 19.500 22Q16 19.500 14.500 15Z" fill="#f6d0e6"/><circle cx="14" cy="14.300" r="1.500" fill="#f4e08a"/></svg>
<div class="abs st" style="top:319.8px;background:#c4314b;"></div>
<div class="abs pname" style="top:310.6px;transform:scaleX(0.905);">İlahə Yusifova</div>
<svg class="abs" style="left:768.2px;top:309.2px" width="14" height="14" viewBox="0 0 14 14"><g fill="none" stroke="#c9c9c9" stroke-width="1"><rect x="5.100" y="1.600" width="3.800" height="7" rx="1.900"/><path d="M3.100 6.800Q3.100 10.400 7 10.400Q10.900 10.400 10.900 6.800M7 10.400V12.600"/><path d="M2 12.400L12.200 1.800" stroke-width="1.100"/></g></svg>
<svg class="abs" style="left:615.800px;top:337.8px" width="20.400" height="20.400" viewBox="0 0 28 28"><circle cx="14" cy="14" r="13.800" fill="#2b2a20"/><path d="M16 3Q22 2 25 7Q22 9 18 8Z" fill="#6f7e40"/><path d="M19 12Q24 11 26 15Q22 17 19 15Z" fill="#5c6a36"/><path d="M4 5Q8 4 12 10L15 13Q19 10 24 9Q22 14 17 15.500Q21 19 21 24Q16 22 14 17.500Q10 22 4 23Q6 17 11 14.500Q6 11 4 5Z" fill="#e9a6cf"/><path d="M6 7Q10 9 13.500 13.500Q10 12 6 7ZM14.500 15Q18 18 19.500 22Q16 19.500 14.500 15Z" fill="#f6d0e6"/><circle cx="14" cy="14.300" r="1.500" fill="#f4e08a"/></svg>
<div class="abs st" style="top:351.3px;background:#c4314b;"></div>
<div class="abs pname" style="top:342.1px;transform:scaleX(0.911);">Nərgiz Təhməzova</div>
<svg class="abs" style="left:768.2px;top:340.7px" width="14" height="14" viewBox="0 0 14 14"><g fill="none" stroke="#c9c9c9" stroke-width="1"><rect x="5.100" y="1.600" width="3.800" height="7" rx="1.900"/><path d="M3.100 6.800Q3.100 10.400 7 10.400Q10.900 10.400 10.900 6.800M7 10.400V12.600"/><path d="M2 12.400L12.200 1.800" stroke-width="1.100"/></g></svg>
<div class="abs pav" style="top:369.3px;background:#ecd3e6;"><div style="text-align:center;font-size:7.400px;line-height:20.400px;color:#8f3f7c;transform:scaleX(.88);">RS</div></div>
<div class="abs st" style="top:382.8px;background:#92c353;"></div>
<div class="abs pname" style="top:373.6px;transform:scaleX(0.889);">Ruqiyyə Salmanlı</div>
<svg class="abs" style="left:768.2px;top:372.2px" width="14" height="14" viewBox="0 0 14 14"><g fill="none" stroke="#c9c9c9" stroke-width="1"><rect x="5.100" y="1.600" width="3.800" height="7" rx="1.900"/><path d="M3.100 6.800Q3.100 10.400 7 10.400Q10.900 10.400 10.900 6.800M7 10.400V12.600"/><path d="M2 12.400L12.200 1.800" stroke-width="1.100"/></g></svg>
<svg class="abs" style="left:615.800px;top:400.8px" width="20.400" height="20.400" viewBox="0 0 28 28"><circle cx="14" cy="14" r="13.800" fill="#eeebe7"/><path d="M5 16Q3 4 13 3Q23 3 22 15Q23 22 20 25L17 17Q14 19 10.500 17L8 25Q5 22 5 16Z" fill="#141010"/><ellipse cx="13.800" cy="11.500" rx="4" ry="5" fill="#ead2c4"/><path d="M9.500 8.500Q13 5 18 8.500Q15 6.500 9.500 8.500Z" fill="#141010"/><path d="M7 28Q8 20 14 19.500Q20 20 21 28Z" fill="#d9d4cf"/></svg>
<div class="abs st" style="top:414.3px;background:#c4314b;"></div>
<div class="abs pname" style="top:405.1px;transform:scaleX(0.909);">Sədaqət Qaragözova</div>
<svg class="abs" style="left:768.2px;top:403.7px" width="14" height="14" viewBox="0 0 14 14"><g fill="none" stroke="#c9c9c9" stroke-width="1"><rect x="5.100" y="1.600" width="3.800" height="7" rx="1.900"/><path d="M3.100 6.800Q3.100 10.400 7 10.400Q10.900 10.400 10.900 6.800M7 10.400V12.600"/><path d="M2 12.400L12.200 1.800" stroke-width="1.100"/></g></svg>
<svg class="abs" style="left:615.800px;top:432.3px" width="20.400" height="20.400" viewBox="0 0 28 28"><circle cx="14" cy="14" r="13.800" fill="#f3f0ea"/><path d="M6.500 17.500Q9 8.500 18.500 6.500Q21.500 8 20.500 12.500Q18 19 10.500 21Q7 20.500 6.500 17.500Z" fill="#dfa754"/><circle cx="12" cy="15.500" r="1" fill="#4a3020"/><circle cx="15.500" cy="12.500" r="1" fill="#4a3020"/><circle cx="18" cy="11" r=".9" fill="#4a3020"/></svg>
<div class="abs st" style="top:445.8px;background:#c4314b;"></div>
<div class="abs pname" style="top:436.6px;transform:scaleX(0.921);">Zümrüd Bağırova</div>
<svg class="abs" style="left:768.2px;top:435.2px" width="14" height="14" viewBox="0 0 14 14"><g fill="none" stroke="#c9c9c9" stroke-width="1"><rect x="5.100" y="1.600" width="3.800" height="7" rx="1.900"/><path d="M3.100 6.800Q3.100 10.400 7 10.400Q10.900 10.400 10.900 6.800M7 10.400V12.600"/><path d="M2 12.400L12.200 1.800" stroke-width="1.100"/></g></svg>
<div class="abs pav" style="top:486.8px;background:#dcdaf0;"><div style="text-align:center;font-size:7.400px;line-height:20.400px;color:#4b4a8c;transform:scaleX(.88);">EƏ</div></div>
<div class="abs st" style="top:500.3px;background:#c4314b;"><div style="position:absolute;left:1.500px;top:2.600px;width:3.400px;height:1.200px;background:#fff;"></div></div>
<div class="abs pname" style="top:491.1px;transform:scaleX(0.896);">Elnurə Əzizova</div>
<svg class="abs" style="left:615.800px;top:518.3px" width="20.400" height="20.400" viewBox="0 0 28 28"><circle cx="14" cy="14" r="13.800" fill="#5a3a26"/><path d="M0 14Q1 6 6 2.500L7 26Q1 22 0 14Z" fill="#3a2418"/><path d="M20 2Q27 6 27.800 14Q27 22 21 26Z" fill="#7a5236"/><path d="M8 28Q8 15 11 12.500L14 11.500L17 12.500Q20 15 20 28Z" fill="#1f2a4a"/><path d="M12.800 12L14 22L15.200 12Z" fill="#e8e8ee"/><path d="M13.500 13.500L14 21L14.500 13.500Z" fill="#a33"/><circle cx="14" cy="8" r="2.900" fill="#d2a58c"/><path d="M11 7.200Q11.500 4.500 14 4.500Q16.500 4.500 17 7.200Q14 6 11 7.200Z" fill="#4a3a30"/></svg>
<div class="abs st" style="top:531.8px;background:#92c353;"></div>
<div class="abs pname" style="top:522.6px;transform:scaleX(0.923);">Asəf Qənbərov</div>
<svg class="abs" style="left:615.800px;top:549.3px" width="20.400" height="20.400" viewBox="0 0 28 28"><circle cx="14" cy="14" r="13.800" fill="#f1e4cf"/><path d="M11 16Q9 5 16 4.500Q22 5 21 14Q21.500 20 19 23L12.500 23Q10.500 20 11 16Z" fill="#e2c08a"/><ellipse cx="16" cy="11.500" rx="3.300" ry="4.300" fill="#ecc9ae"/><path d="M8 28Q9 20.500 15.500 20Q22 20.500 23 28Z" fill="#26211f"/><path d="M3 20Q6 17 9 19L8 27Q4 25 3 20Z" fill="#d9c4a4"/></svg>
<div class="abs st" style="top:562.8px;background:#f8c73e;"></div>
<div class="abs pname" style="top:553.6px;transform:scaleX(0.917);">Zərifə Əliyeva</div>
<div class="abs pav" style="top:580.8px;background:radial-gradient(circle 4px at 11px 8px,#b89a8a 0,#8a6a5a 80%,rgba(138,106,90,0) 100%),#2a2230;"></div>
<!--PANEL-END-->
</body>
</html>
